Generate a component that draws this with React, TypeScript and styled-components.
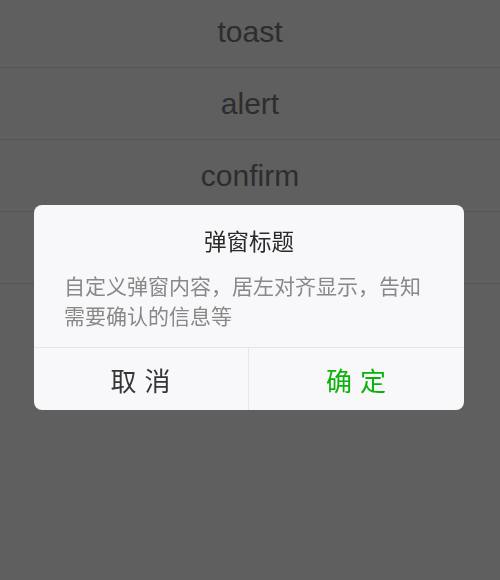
import styled, { createGlobalStyle } from "styled-components";

const GlobalStyle = createGlobalStyle`
  html, body {
    margin: 0;
    padding: 0;
    background-color: #5f5f5f;
    font-family: "Liberation Sans", "Noto Sans CJK SC", sans-serif;
  }
`;

const List = styled.div`
  margin-top: -4px;

  display: flex;
  flex-direction: column;
`;

const Item = styled.div`
  height: 71px;

  display: flex;
  justify-content: center;
  align-items: center;

  font-size: 30px;
  color: #2d2d2d;

  border-bottom: 1px solid #555555;
`;

const Mask = styled.div`
  position: fixed;
  inset: 0;

  padding-top: 205px;

  display: flex;
  flex-direction: column;
  align-items: center;
`;

const Dialog = styled.div`
  width: 430px;
  margin-left: -2px;

  background-color: #f8f8fa;
  border-radius: 8px;
  overflow: hidden;

  font-family: "Noto Sans CJK SC", "Liberation Sans", sans-serif;
`;

const Body = styled.div`
  padding: 20px 30px 17px;
`;

const Title = styled.div`
  font-size: 22.5px;
  line-height: 30px;
  text-align: center;
  color: #2a2a2a;
`;

const Content = styled.div`
  margin-top: 15px;

  font-size: 21px;
  line-height: 30px;
  color: #888888;
  word-break: break-all;
`;

const Footer = styled.div`
  height: 62px;

  display: grid;
  grid-template-columns: 1fr 1fr;

  border-top: 1px solid #e5e5e7;
`;

const Button = styled.div<{ $primary?: boolean }>`
  display: flex;
  justify-content: center;
  align-items: center;

  font-size: 26px;
  letter-spacing: 1px;
  color: ${(p) => (p.$primary ? "#0bb20c" : "#353535")};

  &:first-child {
    border-right: 1px solid #e5e5e7;
  }
`;

const App = () => {
  const items: string[] = ["toast", "alert", "confirm", ""];

  return (
    <>
      <GlobalStyle />
      <List>
        {items.map((item, index) => (
          <Item key={index}>{item}</Item>
        ))}
      </List>
      <Mask>
        <Dialog>
          <Body>
            <Title>弹窗标题</Title>
            <Content>自定义弹窗内容，居左对齐显示，告知需要确认的信息等</Content>
          </Body>
          <Footer>
            <Button>取 消</Button>
            <Button $primary>确 定</Button>
          </Footer>
        </Dialog>
      </Mask>
    </>
  );
};

export default App;
